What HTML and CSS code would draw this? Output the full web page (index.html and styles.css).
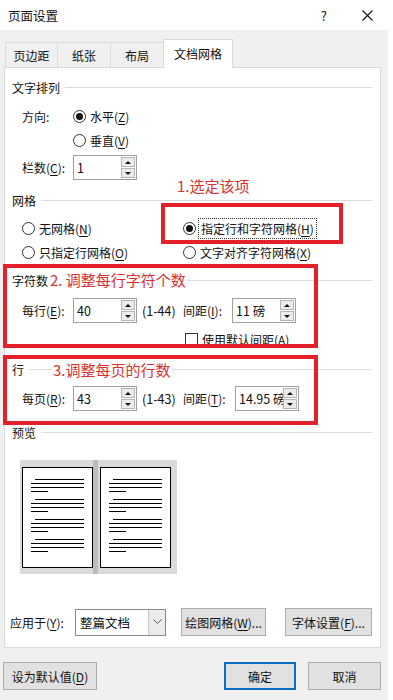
FILE: index.html
```html
<!DOCTYPE html>
<html lang="zh-CN">
<head>
    <meta charset="UTF-8">
    <meta name="viewport" content="width=device-width, initial-scale=1.0">
    <title>页面设置</title>
    <link rel="stylesheet" href="styles.css">
</head>
<body>
    <div class="dialog">
        <div class="titlebar">
            <span class="title">页面设置</span>
            <span class="help">?</span>
            <svg class="close" width="11" height="11" viewBox="0 0 11 11">
                <path d="M0.5 0.5 L10.5 10.5 M10.5 0.5 L0.5 10.5" stroke="#111" stroke-width="1.1" fill="none"/>
            </svg>
        </div>

        <div class="tabs">
            <div class="tab t1">页边距</div>
            <div class="tab t2">纸张</div>
            <div class="tab t3">布局</div>
            <div class="tab active">文档网格</div>
        </div>

        <div class="panel">
            <div class="group-head"><span>文字排列</span><i></i></div>
            <div class="row dir-row">
                <span class="lbl">方向:</span>
                <span class="radio on"><b></b>水平(<u>Z</u>)</span>
            </div>
            <div class="row vert-row">
                <span class="lbl"></span>
                <span class="radio"><b></b>垂直(<u>V</u>)</span>
            </div>
            <div class="row cols-row">
                <span class="lbl">栏数(<u>C</u>):</span>
                <div class="spin"><span class="val">1</span><span class="arrows"><em class="up"></em><em class="down"></em></span></div>
            </div>

            <div class="group-head grid-head"><span>网格</span><i></i></div>
            <div class="row radio-row r1">
                <span class="radio col-a"><b></b>无网格(<u>N</u>)</span>
                <span class="radio on focus"><b></b><span class="focus-text">指定行和字符网格(<u>H</u>)</span></span>
            </div>
            <div class="row radio-row r2">
                <span class="radio col-a"><b></b>只指定行网格(<u>O</u>)</span>
                <span class="radio"><b></b>文字对齐字符网格(<u>X</u>)</span>
            </div>

            <div class="group-head chars-head"><span>字符数</span><i></i></div>
            <div class="row num-row per-line">
                <span class="lbl">每行(<u>E</u>):</span>
                <div class="spin"><span class="val">40</span><span class="arrows"><em class="up"></em><em class="down"></em></span></div>
                <span class="range">(1-44)</span>
                <span class="lbl2">间距(<u>I</u>):</span>
                <div class="spin"><span class="val">11 磅</span><span class="arrows"><em class="up"></em><em class="down"></em></span></div>
            </div>
            <div class="row check-row">
                <span class="check"><b></b>使用默认间距(<u>A</u>)</span>
            </div>

            <div class="group-head lines-head"><span>行</span><i></i></div>
            <div class="row num-row per-page">
                <span class="lbl">每页(<u>R</u>):</span>
                <div class="spin"><span class="val">43</span><span class="arrows"><em class="up"></em><em class="down"></em></span></div>
                <span class="range">(1-43)</span>
                <span class="lbl2 wide">间距(<u>T</u>):</span>
                <div class="spin"><span class="val">14.95 磅</span><span class="arrows"><em class="up"></em><em class="down"></em></span></div>
            </div>

            <div class="group-head preview-head"><span>预览</span><i></i></div>
            <svg class="preview" width="157" height="114" viewBox="0 0 157 114">
                <rect x="0" y="0" width="157" height="114" fill="#dadada"/>
                <rect x="73" y="0" width="5" height="114" fill="#bdbdbd"/>
                <rect x="2.5" y="7.5" width="70" height="100" fill="#fff" stroke="#000"/>
                <rect x="80.5" y="7.5" width="70" height="100" fill="#fff" stroke="#000"/>
                <g stroke="#000" stroke-width="1">
                    <path d="M15 19.5h49M11 23.5h53M11 27.5h53M11 31.5h17
                             M15 39.5h49M11 43.5h53M11 47.5h53M11 51.5h17
                             M15 59.5h49M11 63.5h53M11 67.5h53M11 71.5h17
                             M15 79.5h49M11 83.5h53M11 87.5h53M11 91.5h17"/>
                    <path d="M93 19.5h49M89 23.5h53M89 27.5h53M89 31.5h17
                             M93 39.5h49M89 43.5h53M89 47.5h53M89 51.5h17
                             M93 59.5h49M89 63.5h53M89 67.5h53M89 71.5h17
                             M93 79.5h49M89 83.5h53M89 87.5h53M89 91.5h17"/>
                </g>
            </svg>

            <div class="row apply-row">
                <span class="lbl3">应用于(<u>Y</u>):</span>
                <div class="select"><span class="val">整篇文档</span>
                    <span class="drop"><svg width="9" height="6" viewBox="0 0 9 6"><path d="M0.5 0.5 L4.5 4.5 L8.5 0.5" stroke="#555" fill="none"/></svg></span>
                </div>
                <button class="btn b-draw">绘图网格(<u>W</u>)...</button>
                <button class="btn b-font">字体设置(<u>F</u>)...</button>
            </div>
        </div>

        <div class="footer">
            <button class="btn b-default">设为默认值(<u>D</u>)</button>
            <button class="btn b-ok">确定</button>
            <button class="btn b-cancel">取消</button>
        </div>

        <!-- annotations drawn over the dialog -->
        <div class="note n1">1.选定该项</div>
        <div class="note n2">2. 调整每行字符个数</div>
        <div class="note n3">3.调整每页的行数</div>
        <div class="mark m1"></div>
        <div class="mark m2"></div>
        <div class="mark m3"></div>
    </div>
</body>
</html>
```

FILE: styles.css
```css
* {
    box-sizing: border-box;
}
body {
    margin: 0;
    background-color: #ffffff;
    font-family: "Noto Sans CJK SC", "Noto Sans", sans-serif;
    font-size: 12px;
    color: #111;
}
.dialog {
    position: relative;
    width: 388px;
    height: 700px;
    background-color: #f0f0f0;
}
u {
    text-decoration: underline;
    text-underline-offset: 2px;
}

/* title bar */
.titlebar {
    height: 30px;
    background-color: #ffffff;
    display: flex;
    align-items: center;
    padding-left: 8px;
}
.title {
    font-size: 12.5px;
    flex-grow: 1;
}
.help {
    font-size: 13px;
    margin-right: 35px;
}
.close {
    margin-right: 15px;
}

/* tabs */
.tabs {
    display: flex;
    align-items: flex-end;
    height: 28px;
    margin-top: 9px;
    padding-left: 5px;
}
.tab {
    height: 25px;
    border: 1px solid #d9d9d9;
    border-bottom: none;
    margin-left: -1px;
    display: flex;
    align-items: center;
    justify-content: center;
    background-color: #f0f0f0;
}
.tab:first-child {
    margin-left: 0;
}
.t1 { width: 53px; }
.t2 { width: 54px; }
.t3 { width: 54px; }
.tab.active {
    position: relative;
    z-index: 1;
    width: 70px;
    height: 29px;
    margin-bottom: -1px;
    background-color: #ffffff;
    padding-bottom: 2px;
}

/* panel */
.panel {
    margin-left: 4px;
    width: 377px;
    height: 581px;
    background-color: #ffffff;
    border: 1px solid #d9d9d9;
    padding: 11px 7px 0 7px;
}
.group-head {
    display: flex;
    align-items: center;
    height: 16px;
}
.group-head i {
    flex-grow: 1;
    border-top: 1px solid #dcdcdc;
    margin-left: 5px;
    margin-right: 1px;
}
.row {
    display: flex;
    align-items: center;
    margin-left: 10px;
}
.lbl {
    width: 51px;
}
.dir-row { height: 20px; margin-top: 11px; }
.vert-row { height: 20px; margin-top: 4px; }
.cols-row { height: 25px; margin-top: 5px; }
.grid-head { margin-top: 12px; }
.radio-row { height: 20px; }
.r1 { margin-top: 10px; }
.r2 { margin-top: 4px; }
.chars-head { margin-top: 10px; }
.per-line { height: 25px; margin-top: 10px; }
.check-row { height: 20px; margin-top: 6px; margin-left: 173px; }
.lines-head { margin-top: 12px; }
.per-page { height: 25px; margin-top: 9px; }
.preview-head { margin-top: 13px; }

/* radio and checkbox */
.radio, .check {
    display: inline-flex;
    align-items: center;
}
.radio b {
    width: 13px;
    height: 13px;
    border: 1px solid #333;
    border-radius: 50%;
    margin-right: 4px;
    display: flex;
    align-items: center;
    justify-content: center;
}
.radio.on b::after {
    content: "";
    width: 7px;
    height: 7px;
    border-radius: 50%;
    background-color: #111;
}
.col-a {
    width: 161px;
}
.focus-text {
    outline: 1px dotted #333;
    outline-offset: 1px;
    padding: 0 1px;
}
.check b {
    width: 13px;
    height: 13px;
    border: 1px solid #333;
    margin-right: 4px;
}

/* spin boxes */
.spin {
    width: 64px;
    height: 25px;
    border: 1px solid #a0a0a0;
    display: flex;
    align-items: center;
    justify-content: space-between;
    padding: 1px 1px 1px 3px;
    overflow: hidden;
}
.spin .val {
    white-space: nowrap;
    overflow: hidden;
    font-size: 12.5px;
}
.arrows {
    display: flex;
    flex-direction: column;
    gap: 1px;
    flex-shrink: 0;
    height: 21px;
}
.arrows em {
    width: 14px;
    height: 10px;
    border: 1px solid #b4b4b4;
    background-color: #ececec;
    display: flex;
    align-items: center;
    justify-content: center;
}
.arrows em::after {
    content: "";
    border-left: 3px solid transparent;
    border-right: 3px solid transparent;
}
.arrows .up::after {
    border-bottom: 3px solid #111;
}
.arrows .down::after {
    border-top: 3px solid #111;
}
.range {
    width: 41px;
    margin-left: 5px;
    font-size: 12.5px;
}
.lbl2 {
    width: 49px;
}
.lbl2.wide {
    width: 52px;
}

/* preview */
.preview {
    display: block;
    margin-top: 20px;
    margin-left: 8px;
}

/* apply row */
.apply-row {
    height: 28px;
    margin-top: 34px;
    margin-left: -2px;
}
.lbl3 {
    width: 65px;
}
.select {
    width: 91px;
    height: 27px;
    border: 1px solid #8a8a8a;
    display: flex;
    align-items: center;
    justify-content: space-between;
    padding-left: 4px;
}
.select .val {
    font-size: 12.5px;
}
.drop {
    width: 17px;
    height: 25px;
    border-left: 1px solid #c8c8c8;
    background-color: #ececec;
    display: flex;
    align-items: center;
    justify-content: center;
}
.btn {
    font-family: inherit;
    font-size: 12px;
    color: #111;
    height: 28px;
    background-color: #e1e1e1;
    border: 1px solid #adadad;
    padding: 0;
}
.b-draw {
    width: 85px;
    margin-left: 15px;
}
.b-font {
    width: 87px;
    margin-left: 19px;
}

/* footer */
.footer {
    display: flex;
    margin-top: 14px;
    padding-left: 3px;
}
.b-default {
    width: 94px;
}
.b-ok {
    width: 72px;
    margin-left: 127px;
    border: 2px solid #0a6fc2;
}
.b-cancel {
    width: 73px;
    margin-left: 12px;
}

/* red annotations */
.note {
    position: absolute;
    color: #d9312f;
    font-size: 15px;
    line-height: 18px;
    background-color: #ffffff;
    padding: 0 1px;
}
.n1 { left: 176px; top: 177px; }
.n2 { left: 49px; top: 271px; }
.n3 { left: 52px; top: 361px; }
.mark {
    position: absolute;
    border: 4px solid #e3212b;
}
.m1 { left: 161px; top: 203px; width: 182px; height: 41px; }
.m2 { left: 3px; top: 264px; width: 315px; height: 84px; }
.m3 { left: 3px; top: 355px; width: 315px; height: 70px; }
```
